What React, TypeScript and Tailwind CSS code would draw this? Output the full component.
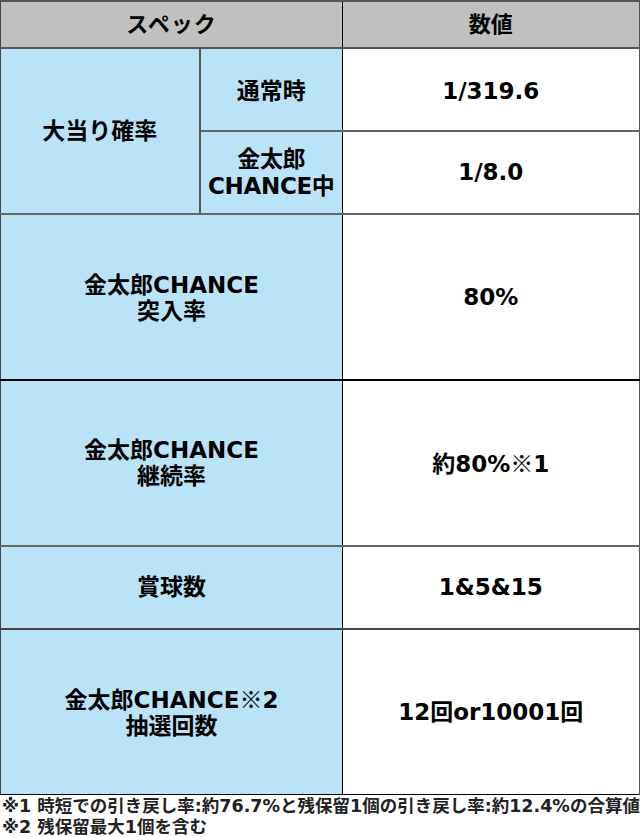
import React from "react";

const font = { fontFamily: '"DejaVu Sans", "Noto Sans CJK JP", sans-serif' };
const cjk = { fontFamily: '"Noto Sans CJK JP", sans-serif' };

export default function App() {
  return (
    <div className="w-[640px] h-[837px] bg-white text-black overflow-hidden" style={font}>
      <table className="w-[639px] table-fixed border-collapse font-bold text-[23px]">
        <colgroup>
          <col className="w-[199px]" />
          <col className="w-[143px]" />
          <col className="w-[297px]" />
        </colgroup>
        <tbody>
          <tr className="h-[47px] bg-[#c0c0c0] text-[22px]">
            <td colSpan={2} className="border-t-2 border-l border-b-2 border-r border-t-[#555] border-l-[#444] border-b-[#555] border-r-black text-center align-middle tracking-[1px]">
              スペック
            </td>
            <td className="border-t-2 border-b-2 border-r-2 border-[#555] text-center align-middle">
              数値
            </td>
          </tr>
          <tr className="h-[83px]">
            <td rowSpan={2} className="bg-[#bbe3f8] border-l border-l-[#444] border-r-2 border-r-[#555] border-b-2 border-b-[#666] text-center align-middle leading-tight">
              大当り確率
            </td>
            <td className="bg-[#bbe3f8] border-b-2 border-b-[#666] border-r border-r-black text-center align-middle leading-tight pt-[4px]">
              通常時
            </td>
            <td className="bg-white border-b-2 border-b-[#666] border-r-2 border-r-[#555] text-center align-middle pt-[4px]">
              1/319.6
            </td>
          </tr>
          <tr className="h-[83px]">
            <td className="bg-[#bbe3f8] border-b-2 border-b-[#666] border-r border-r-black text-center align-middle leading-[27px] tracking-[-0.3px]">
              金太郎
              <br />
              CHANCE中
            </td>
            <td className="bg-white border-b-2 border-b-[#666] border-r-2 border-r-[#555] text-center align-middle">
              1/8.0
            </td>
          </tr>
          <tr className="h-[166px]">
            <td colSpan={2} className="bg-[#bbe3f8] border-l border-l-[#444] border-b-2 border-b-black border-r border-r-black text-center align-middle leading-[26px] pt-[2px]">
              金太郎CHANCE
              <br />
              突入率
            </td>
            <td className="bg-white border-b-2 border-b-black border-r-2 border-r-[#555] text-center align-middle">
              80%
            </td>
          </tr>
          <tr className="h-[166px]">
            <td colSpan={2} className="bg-[#bbe3f8] border-l border-l-[#444] border-b-2 border-b-[#666] border-r border-r-black text-center align-middle leading-[26px]">
              金太郎CHANCE
              <br />
              継続率
            </td>
            <td className="bg-white border-b-2 border-b-[#666] border-r-2 border-r-[#555] text-center align-middle">
              約80%<span style={cjk}>※</span>1
            </td>
          </tr>
          <tr className="h-[83px]">
            <td colSpan={2} className="bg-[#bbe3f8] border-l border-l-[#444] border-b-2 border-b-[#444] border-r border-r-black text-center align-middle">
              賞球数
            </td>
            <td className="bg-white border-b-2 border-b-[#444] border-r-2 border-r-[#555] text-center align-middle">
              1&amp;5&amp;15
            </td>
          </tr>
          <tr className="h-[165px]">
            <td colSpan={2} className="bg-[#bbe3f8] border-l border-l-[#444] border-b border-b-black border-r border-r-black text-center align-middle leading-[26px]">
              金太郎CHANCE<span style={cjk} className="font-normal">※</span>2
              <br />
              抽選回数
            </td>
            <td className="bg-white border-b border-b-black border-r-2 border-r-[#555] text-center align-middle">
              12回or10001回
            </td>
          </tr>
        </tbody>
      </table>
      <div className="pl-[2px] pt-[1px] text-[17.5px] leading-[21px] font-bold text-[#222] whitespace-nowrap">
        <div className="h-[21px]">※1 時短での引き戻し率:約76.7%と残保留1個の引き戻し率:約12.4%の合算値</div>
        <div className="h-[21px]">※2 残保留最大1個を含む</div>
      </div>
    </div>
  );
}
